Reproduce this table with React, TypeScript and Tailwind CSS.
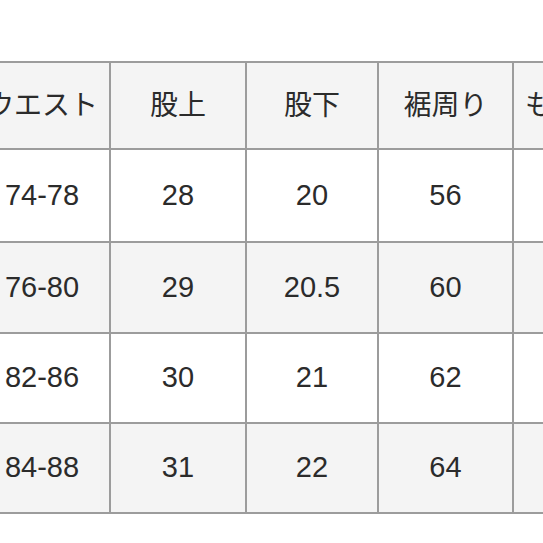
import React from 'react';

const widths = ['w-[136px]', 'w-[136px]', 'w-[132px]', 'w-[135px]', 'w-[136px]'];

const header = ['ウエスト', '股上', '股下', '裾周り', 'もも周り'];

const rows = [
  { h: 'h-[93px]', shade: false, cells: ['74-78', '28', '20', '56', ''] },
  { h: 'h-[91px]', shade: true, cells: ['76-80', '29', '20.5', '60', ''] },
  { h: 'h-[90px]', shade: false, cells: ['82-86', '30', '21', '62', ''] },
  { h: 'h-[90px]', shade: true, cells: ['84-88', '31', '22', '64', ''] },
];

const App: React.FC = () => {
  return (
    <div
      className="w-[543px] h-[543px] overflow-hidden bg-white pt-[61px] text-[#2b2b2b]"
      style={{ fontFamily: '"Liberation Sans", "Noto Sans CJK JP", sans-serif' }}
    >
      <div className="ml-[-25px] w-[675px]">
        {/* header row */}
        <div className="flex h-[89px] border-t-2 border-b-2 border-[#9c9c9c] bg-[#f4f4f4]">
          {header.map((label, i) => (
            <div
              key={i}
              className={`${widths[i]} shrink-0 border-r-2 border-[#9c9c9c] flex items-center justify-center text-[28px] whitespace-nowrap`}
            >
              {label}
            </div>
          ))}
        </div>

        {rows.map((row, r) => (
          <div
            key={r}
            className={`flex ${row.h} border-b-2 border-[#9c9c9c] ${row.shade ? 'bg-[#f4f4f4]' : 'bg-white'}`}
          >
            {row.cells.map((cell, i) => (
              <div
                key={i}
                className={`${widths[i]} shrink-0 border-r-2 border-[#9c9c9c] flex items-center justify-center text-[29px]`}
              >
                {cell}
              </div>
            ))}
          </div>
        ))}
      </div>
    </div>
  );
};

export default App;
